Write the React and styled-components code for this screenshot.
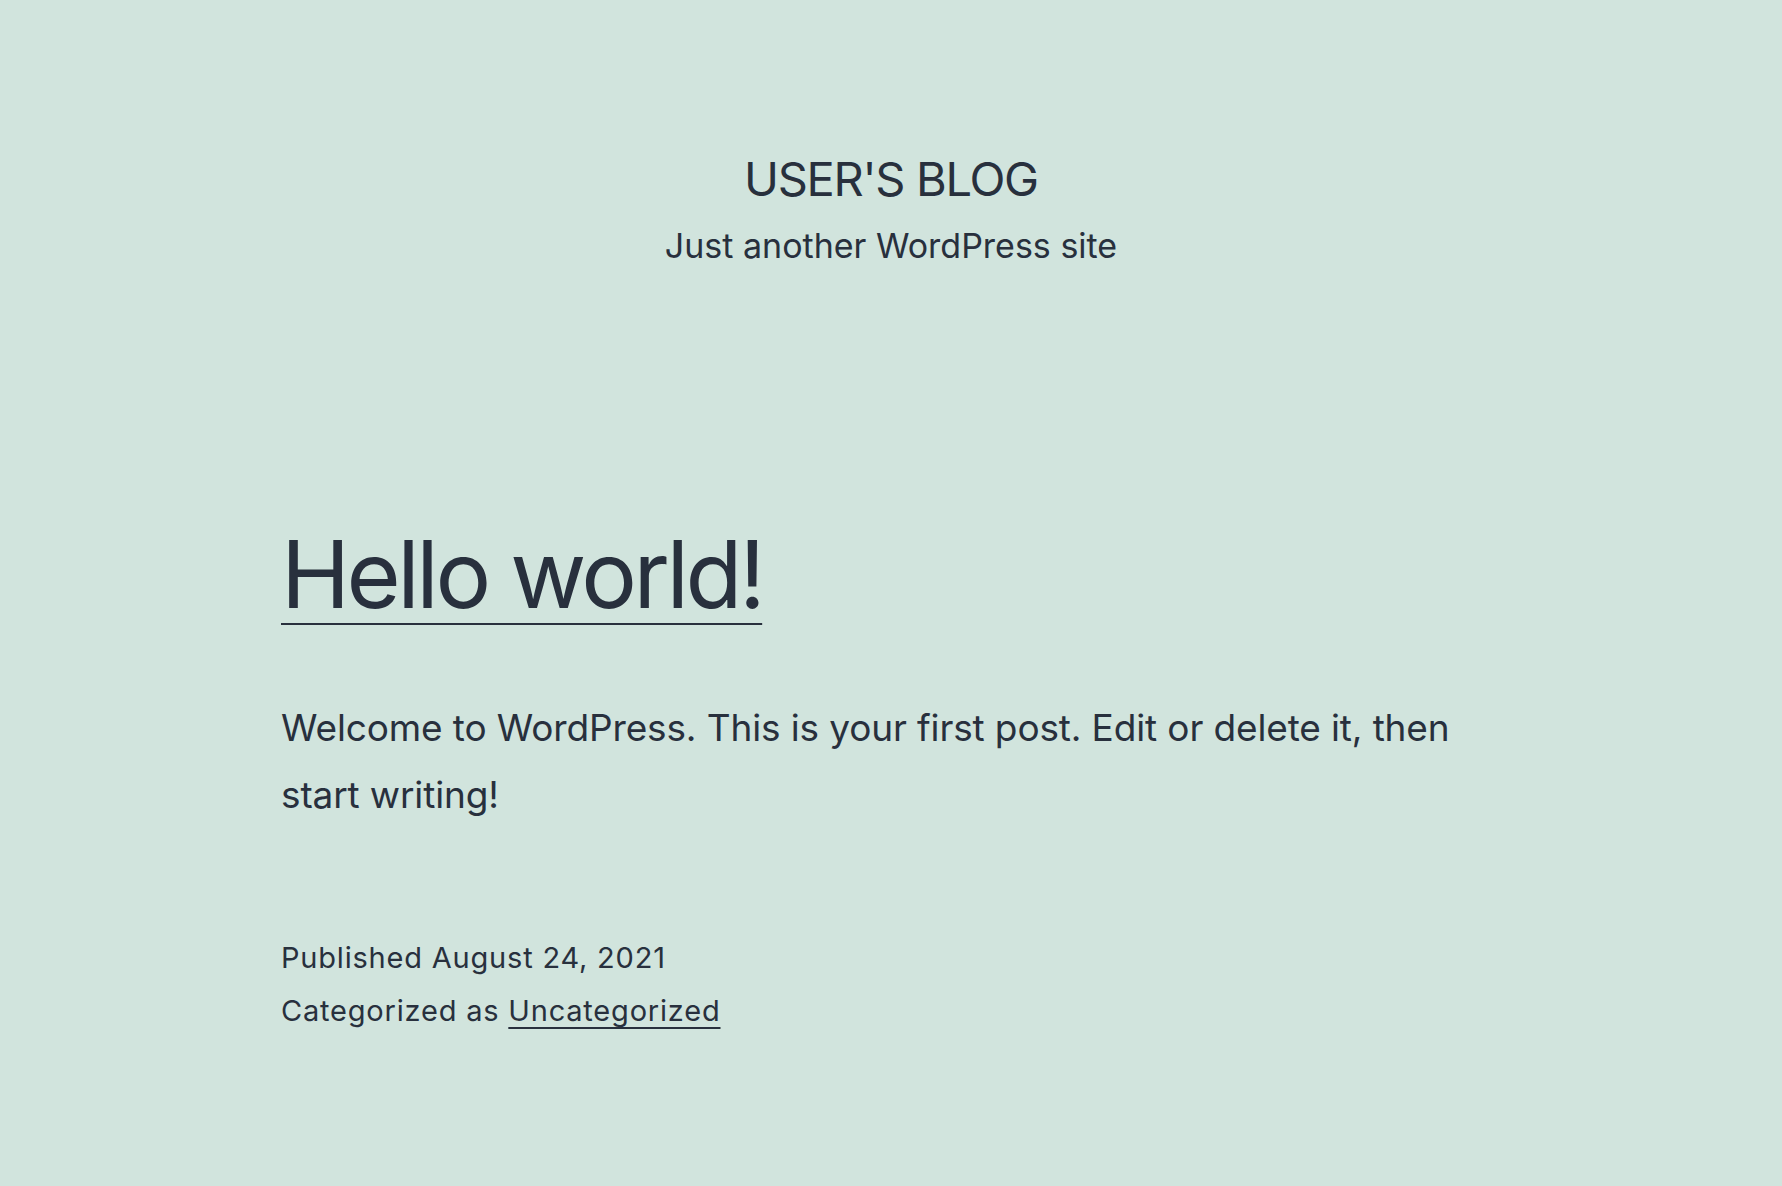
import React from "react";
import styled, { createGlobalStyle } from "styled-components";

const Global = createGlobalStyle`
  html, body { margin: 0; padding: 0; background: #d1e4dd; }
  body { font-family: Inter, "Noto Sans", sans-serif; color: #28303d; }
`;

const Page = styled.div`
  min-height: 1186px;
  background: #d1e4dd;
  display: flex;
  flex-direction: column;
`;

const Header = styled.header`
  display: flex;
  flex-direction: column;
  align-items: center;
  padding-top: 151px;
`;

const SiteTitle = styled.h1`
  margin: 0;
  font-size: 47px;
  line-height: 56px;
  font-weight: 400;
  letter-spacing: -1.3px;
  text-transform: uppercase;
`;

const Tagline = styled.p`
  margin: 17px 0 0;
  font-size: 34px;
  line-height: 44px;
  letter-spacing: 0;
`;

const Main = styled.main`
  padding: 255px 281px 0;
  display: flex;
  flex-direction: column;
`;

const PostTitle = styled.h2`
  margin: 0;
  font-size: 93px;
  line-height: 102px;
  font-weight: 400;
  letter-spacing: -3.5px;
`;

const TitleLink = styled.a`
  color: inherit;
  text-decoration: underline;
  text-decoration-thickness: 2px;
  text-underline-offset: 15px;
`;

const Body = styled.p`
  margin: 70px 0 0;
  font-size: 37px;
  line-height: 66.5px;
  letter-spacing: -0.13px;
`;

const Meta = styled.footer`
  margin-top: 103px;
  font-size: 29px;
  line-height: 53px;
  letter-spacing: 0.8px;
`;

const MetaLine = styled.div``;

const CatLink = styled.a`
  color: inherit;
  text-decoration: underline;
  text-decoration-thickness: 2px;
  text-underline-offset: 6px;
`;

export default function App() {
  return (
    <Page>
      <Global />
      <Header>
        <SiteTitle>User's Blog</SiteTitle>
        <Tagline>Just another WordPress site</Tagline>
      </Header>
      <Main>
        <PostTitle>
          <TitleLink href="#">Hello world!</TitleLink>
        </PostTitle>
        <Body>
          Welcome to WordPress. This is your first post. Edit or delete it, then start writing!
        </Body>
        <Meta>
          <MetaLine>Published August 24, 2021</MetaLine>
          <MetaLine>
            Categorized as <CatLink href="#">Uncategorized</CatLink>
          </MetaLine>
        </Meta>
      </Main>
    </Page>
  );
}
